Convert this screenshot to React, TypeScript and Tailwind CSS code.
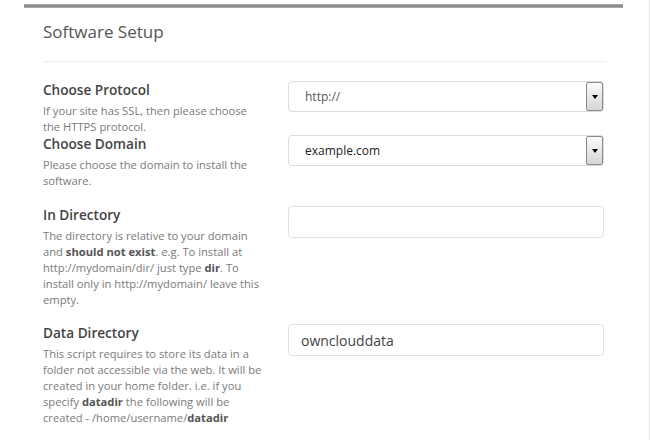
import React from "react";

function SelectBox({ value, dark }: { value: string; dark?: boolean }) {
  return (
    <div className="relative flex h-[31px] w-[316px] items-center rounded-[4px] border border-[#dcdcdc] bg-white pl-[16px]">
      <span className={`text-[12px] ${dark ? "text-[#222]" : "text-[#555]"}`}>{value}</span>
      <div className="absolute right-[0px] top-[0px] flex h-[29px] w-[17px] items-center justify-center rounded-[2px] border border-[#8a8a8a] bg-gradient-to-b from-[#fbfbfb] to-[#d6d6d6]">
        <div className="h-0 w-0 border-x-[3.5px] border-t-[4px] border-x-transparent border-t-black" />
      </div>
    </div>
  );
}

function TextBox({ value }: { value?: string }) {
  return (
    <div className="flex h-[32px] w-[316px] items-center rounded-[4px] border border-[#e2e2e2] bg-white pl-[12px]">
      <span className="text-[14px] text-[#444]">{value}</span>
    </div>
  );
}

function Row({
  label,
  children,
  field,
  className,
}: {
  label: string;
  children: React.ReactNode;
  field: React.ReactNode;
  className?: string;
}) {
  return (
    <div className={`flex ${className ?? ""}`}>
      <div className="w-[245px] pr-[24px]">
        <div className="text-[13.6px] font-semibold leading-[18px] text-[#444]">{label}</div>
        <div className="mt-[4px] text-[11.2px] leading-[16px] text-[#7a7a7a]">{children}</div>
      </div>
      <div>{field}</div>
    </div>
  );
}

export default function App() {
  return (
    <div
      className="relative h-[440px] w-[650px] overflow-hidden bg-white"
      style={{ fontFamily: '"Open Sans", "Noto Sans", sans-serif' }}
    >
      <div className="absolute right-0 top-0 h-full w-[1px] bg-[#e6e6e6]" />
      <div className="ml-[24px] mt-[4px] h-[4px] w-[599px] border-y border-y-[#a8a8a8] bg-[#8c8c8c]" />
      <div className="px-[43px]">
        <h1 className="mt-[13px] text-[17px] leading-[22px] text-[#555]">Software Setup</h1>
        <div className="mt-[18px] h-px w-[563px] bg-[#ececec]" />
        <div className="pt-[19px]">
          <Row label="Choose Protocol" field={<SelectBox value="http://" />}>
            If your site has SSL, then please choose the HTTPS protocol.
          </Row>
          <Row label="Choose Domain" field={<SelectBox value="example.com" dark />}>
            Please choose the domain to install the software.
          </Row>
          <Row label="In Directory" className="mt-[17px]" field={<TextBox />}>
            The directory is relative to your domain and{" "}
            <b className="font-bold text-[#555]">should not exist</b>. e.g. To install at
            http://mydomain/dir/ just type <b className="font-bold text-[#555]">dir</b>. To
            install only in http://mydomain/ leave this empty.
          </Row>
          <Row label="Data Directory" className="mt-[16px]" field={<TextBox value="ownclouddata" />}>
            This script requires to store its data in a folder not accessible via the web. It
            will be created in your home folder. i.e. if you specify{" "}
            <b className="font-bold text-[#555]">datadir</b> the following will be created -
            /home/username/<b className="font-bold text-[#555]">datadir</b>
          </Row>
        </div>
      </div>
    </div>
  );
}
